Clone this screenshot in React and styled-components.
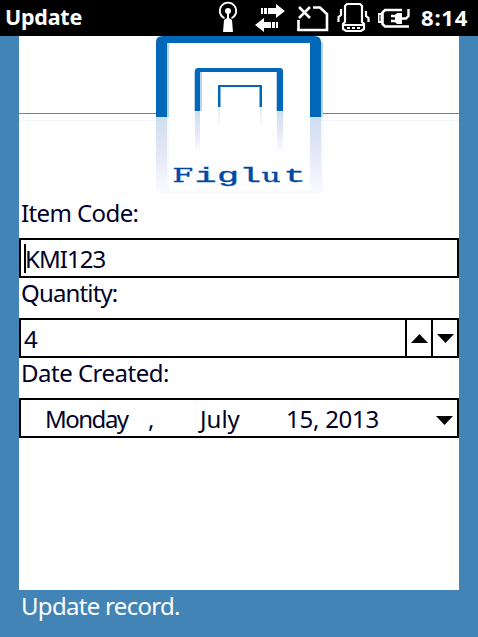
import React from 'react';
import styled, { createGlobalStyle } from 'styled-components';

const Global = createGlobalStyle`
  *{box-sizing:border-box}
  body{margin:0;background:#4384b6;overflow:hidden}
`;
const Screen = styled.main`
  width:478px;height:637px;display:flex;flex-direction:column;background:#4384b6;
  font-family:"Noto Sans","Open Sans",sans-serif;font-size:24px;color:#000028;
`;
const TitleBar = styled.header`
  height:36px;display:flex;align-items:center;background:#000;color:#fff;flex:none;
  font-weight:700;font-size:21.5px;line-height:34px;padding:0 8px 2px 5px;
`;
const Title = styled.span`letter-spacing:${p => p.$track || 0}px;white-space:pre;`;
const Clock = styled(Title)`width:49px;font-size:22px;flex:none;`;
const StatusIcons = styled.svg`display:block;width:200px;height:34px;margin-left:auto;margin-right:8px;flex:none;`;
const Panel = styled.section`
  margin:0 19px;height:554px;background:#fff;display:flex;flex-direction:column;flex:none;
`;
const Logo = styled.svg`display:block;width:440px;height:162px;flex:none;`;
const Label = styled.label`
  height:40px;padding-left:2px;line-height:30px;white-space:pre;flex:none;
  letter-spacing:${p => p.$track || 0}px;
`;
const Field = styled.div`
  height:40px;border:2px solid #000;display:flex;align-items:stretch;flex:none;
  line-height:37px;white-space:pre;padding-left:3px;
`;
const Caret = styled.i`width:2px;height:29px;background:#000;margin:4px -1px 0 0;flex:none;`;
const Value = styled.span`flex:1;letter-spacing:${p => p.$track || 0}px;`;
const Part = styled.span`width:${p => p.$w}px;letter-spacing:${p => p.$track || 0}px;flex:none;`;
const Spin = styled.button`
  width:26px;border:0;border-left:${p => (p.$plain ? 0 : 2)}px solid #000;background:none;padding:0;
  display:flex;align-items:center;justify-content:center;
`;
const Arrow = styled.svg`display:block;width:17px;height:9px;margin-top:${p => p.$drop || 0}px;`;
const Spacer = styled.span`flex:1;`;
const Status = styled.footer`
  padding-left:21px;line-height:31px;color:#fff;letter-spacing:${p => p.$track || 0}px;
`;

const Up = () => <Arrow viewBox="0 0 17 9"><path d="M0 9L8.5 0L17 9Z" /></Arrow>;
const Down = ({ drop }) => <Arrow $drop={drop} viewBox="0 0 17 9"><path d="M0 0H17L8.5 9Z" /></Arrow>;

const Icons = () => (
  <StatusIcons viewBox="213 0 200 34" fill="none" stroke="#fff">
    <g strokeWidth="1.8">
      <path d="M224.500 18.300A8.200 8.200 0 1 1 231.500 18.300" />
      <circle cx="228" cy="11" r="3" fill="#fff" stroke="none" />
      <path d="M227 12H229V18L232 20L233 32H223L224 20L227 18Z" fill="#fff" stroke="none" />
    </g>
    <g fill="#fff" stroke="none">
      <path d="M261 8h2v6h-2zM264 8h3v6h-3zM268 8h8V4l9 7l-9 7v-4h-8z" />
      <path d="M255 25l9-7v4h7v6h-7v4zM272 22h3v6h-3zM276 22h2v6h-2z" />
    </g>
    <path d="M313 7.500H320L327 14V30H298.500V20" strokeWidth="2.6" />
    <path d="M299 7L310 18M310 7L299 18" strokeWidth="2.6" />
    <g strokeWidth="2.2">
      <path d="M347 4H360L362 6V22L364 24V29L361 31H346L343 29V24L345 22V6ZM344 25H363" />
      <path d="M341 9V15L338.500 17V22M366 11V16L368.500 18V22" />
      <path d="M347 28h3M352 28h3M357 28h3" strokeWidth="2" />
    </g>
    <path d="M402 10H385L382.500 12.500V24L385 26.500H409" strokeWidth="2.6" />
    <path d="M378 13H382V23H378Z" fill="#fff" stroke="none" />
    <path d="M380 15V21" stroke="#000" strokeWidth="1" />
    <path d="M397 13H402V24H397L395 22V15Z" fill="#fff" stroke="none" />
    <path d="M391 16H396M391 21H396M402 18.500H406L408.500 16V9" strokeWidth="2.4" />
  </StatusIcons>
);

const Brand = () => (
  <Logo viewBox="19 36 440 162">
    <defs>
      <linearGradient id="fade" x1="0" y1="0" x2="0" y2="1">
        <stop offset="0" stopColor="#cddff0" />
        <stop offset=".5" stopColor="#e5e7f6" />
        <stop offset="1" stopColor="#fafbff" />
      </linearGradient>
    </defs>
    <path d="M19 113.500H156M322 113.500H459" stroke="#61839f" />
    <path d="M19 120.500H156M322 120.500H459" stroke="#f0f4fb" />
    <path d="M167 43h2v74h-2zM321 42h2v75h-2zM200 72h2v39h-2zM194 71h1v40h-1zM276 72h1v39h-1zM282 70h1v41h-1z" fill="#b9d4eb" />
    <path d="M156 117V42Q156 36 163 36H314Q321 36 321 42V117H310V43H167V117Z" fill="#0067b9" />
    <path d="M195 111V71Q195 68 198 68H280Q283 68 283 71V111H277V72H200V111Z" fill="#0067b9" />
    <path d="M218 107V86Q218 85 219 85H261Q262 85 262 86V107H259.500V87H220.500V107Z" fill="#0067b9" />
    <path d="M156 117h11v74h-11zM310 117h11v74h-11z" fill="url(#fade)" />
    <path d="M167 117h2v74h-2zM321 117h2v74h-2z" fill="#f5f9fe" />
    <path d="M195 111h5v40h-5zM277 111h6v40h-6z" fill="url(#fade)" />
    <path d="M218 107h2v18h-2zM260 107h2v18h-2z" fill="url(#fade)" opacity=".6" />
    <path d="M156 191H321L318 194H159Z" fill="#f7faff" />
    <g fill="#0049a3" stroke="#0049a3" strokeWidth=".35" fontFamily="'Liberation Mono',monospace" fontSize="20.500">
      <text transform="translate(172.500 182) scale(1.65 1)" fontFamily="'DejaVu Serif',serif" fontSize="18">F</text>
      <text transform="translate(194.500 182) scale(1.8 1)">i</text>
      <text transform="translate(217 182) scale(1.8 1)">g</text>
      <text transform="translate(239 182) scale(1.8 1)">l</text>
      <text transform="translate(261.500 182) scale(1.65 1)" fontFamily="'DejaVu Serif',serif" fontSize="18">u</text>
      <text transform="translate(283.500 182) scale(1.8 1)">t</text>
    </g>
  </Logo>
);

export default function App() {
  return (
    <Screen>
      <Global />
      <TitleBar><Title $track={-0.25}>Update</Title><Icons /><Clock $track={0.8}>8:14</Clock></TitleBar>
      <Panel>
        <Brand />
        <Label $track={-0.6}>Item Code:</Label>
        <Field><Caret /><Value $track={-0.95}>KMI123</Value></Field>
        <Label $track={-0.85}>Quantity:</Label>
        <Field><Value>4</Value><Spin><Up /></Spin><Spin><Down /></Spin></Field>
        <Label $track={-0.5}>Date Created:</Label>
        <Field>
          <Part $w={21} /><Part $w={103} $track={-1.5}>Monday</Part><Part $w={52}>,</Part>
          <Part $w={86}>July</Part><Part $w={100} $track={-0.25}>15, 2013</Part>
          <Spacer /><Spin $plain><Down drop={4} /></Spin>
        </Field>
      </Panel>
      <Status $track={-0.7}>Update record.</Status>
    </Screen>
  );
}
